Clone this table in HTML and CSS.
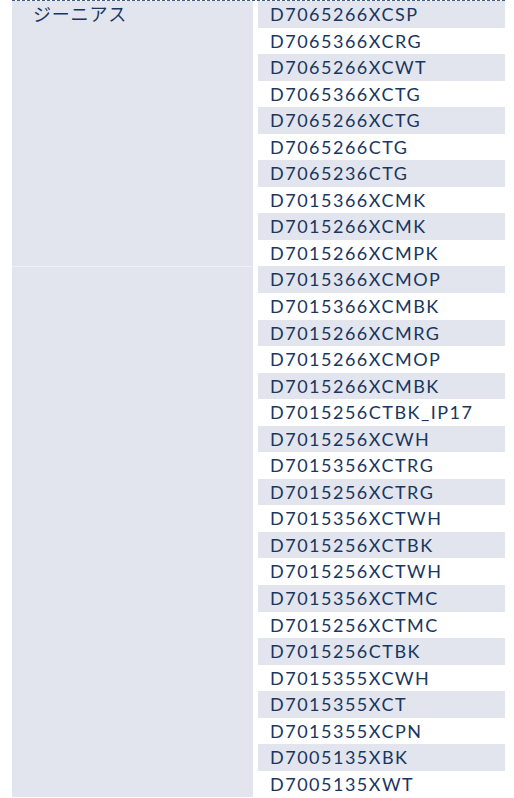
FILE: index.html
```html
<!DOCTYPE html>
<html lang="ja">
<head>
    <meta charset="UTF-8">
    <meta name="viewport" content="width=device-width, initial-scale=1.0">
    <title>対応機種一覧</title>
    <link rel="stylesheet" href="styles.css">
</head>
<body>
    <div class="model-table">
        <div class="group">
            <div class="series">ジーニアス</div>
            <ul class="models">
                <li>D7065266XCSP</li>
                <li>D7065366XCRG</li>
                <li>D7065266XCWT</li>
                <li>D7065366XCTG</li>
                <li>D7065266XCTG</li>
                <li>D7065266CTG</li>
                <li>D7065236CTG</li>
                <li>D7015366XCMK</li>
                <li>D7015266XCMK</li>
                <li>D7015266XCMPK</li>
            </ul>
        </div>
        <div class="group group-next">
            <div class="series"></div>
            <ul class="models">
                <li>D7015366XCMOP</li>
                <li>D7015366XCMBK</li>
                <li>D7015266XCMRG</li>
                <li>D7015266XCMOP</li>
                <li>D7015266XCMBK</li>
                <li>D7015256CTBK_IP17</li>
                <li>D7015256XCWH</li>
                <li>D7015356XCTRG</li>
                <li>D7015256XCTRG</li>
                <li>D7015356XCTWH</li>
                <li>D7015256XCTBK</li>
                <li>D7015256XCTWH</li>
                <li>D7015356XCTMC</li>
                <li>D7015256XCTMC</li>
                <li>D7015256CTBK</li>
                <li>D7015355XCWH</li>
                <li>D7015355XCT</li>
                <li>D7015355XCPN</li>
                <li>D7005135XBK</li>
                <li>D7005135XWT</li>
            </ul>
        </div>
    </div>
</body>
</html>
```

FILE: styles.css
```css
body {
    margin: 0;
    background: #fff;
    font-family: 'Lato', 'Noto Sans CJK JP', sans-serif;
    color: #19365f;
}
.model-table {
    margin: 0 9px 0 12px;
    border-top: 1px dashed #3f5d8c;
}
.group {
    display: grid;
    grid-template-columns: 241px 1fr;
    column-gap: 5px;
}
.group-next .series {
    border-top: 1px solid #eef0f5;
}
.series {
    background-color: #e2e5ee;
    padding-left: 21px;
    font-size: 18px;
    line-height: 26px;
    letter-spacing: 0.8px;
}
.models {
    list-style: none;
    margin: 0;
    padding: 0;
}
.models li {
    height: 26.55px;
    line-height: 26.55px;
    padding-left: 12px;
    font-size: 18px;
    letter-spacing: 1.5px;
}
.models li:nth-child(odd) {
    background-color: #e2e5ee;
}
```
